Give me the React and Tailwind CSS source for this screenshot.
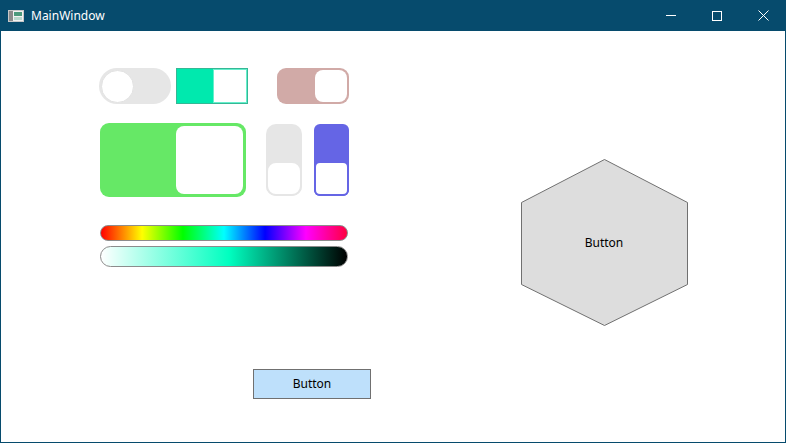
export default function App() {
  const font = { fontFamily: '"Noto Sans", "Open Sans", sans-serif' };
  return (
    <div className="w-[786px] h-[443px] flex flex-col bg-[#064b6d] overflow-hidden" style={font}>
      {/* Title bar */}
      <div className="h-[31px] flex items-center shrink-0 text-white">
        <div className="ml-[8px] w-[16px] h-[16px] flex items-center">
          <svg width="16" height="14" viewBox="0 0 16 14">
            <rect x="0.5" y="1.5" width="15" height="11" fill="#f2f2f2" stroke="#c8c8c8" />
            <rect x="1" y="2" width="4" height="10" fill="#8a8a8a" />
            <rect x="6" y="3" width="8" height="4" fill="#4c9a7c" />
            <rect x="6" y="8" width="8" height="3" fill="#b9d8cc" />
          </svg>
        </div>
        <span className="ml-[7px] text-[12px] leading-none">MainWindow</span>
        <div className="ml-auto flex h-full">
          <div className="w-[46px] h-full flex items-center justify-center">
            <div className="w-[10px] h-px bg-white" />
          </div>
          <div className="w-[46px] h-full flex items-center justify-center">
            <div className="w-[10px] h-[10px] border border-white" />
          </div>
          <div className="w-[46px] h-full flex items-center justify-center">
            <svg width="11" height="11" viewBox="0 0 11 11">
              <path d="M0.5 0.5 L10.5 10.5 M10.5 0.5 L0.5 10.5" stroke="white" strokeWidth="1" />
            </svg>
          </div>
        </div>
      </div>
      {/* Client */}
      <div className="flex-1 mx-px mb-px bg-white flex flex-col">
        <div className="flex pt-[37px]">
          {/* Left column */}
          <div className="ml-[98px] w-[250px] flex flex-col">
            <div className="flex items-start h-[36px]">
              <div className="w-[72px] h-[36px] rounded-full bg-[#e6e6e6] flex items-center px-[2px]">
                <div className="w-[33px] h-[33px] rounded-full bg-white border border-[#e2e2e2]" />
              </div>
              <div className="ml-[5px] w-[72px] h-[36px] bg-[#00e9ae] border border-[#35b895] flex justify-end">
                <div className="w-[34px] h-full bg-white border border-[#66efcc]" />
              </div>
              <div className="ml-[29px] w-[72px] h-[36px] rounded-[9px] bg-[#d1aaa7] flex items-center justify-end pr-[2px]">
                <div className="w-[32px] h-[32px] rounded-[8px] bg-white" />
              </div>
            </div>
            <div className="flex items-start mt-[19px]">
              <div className="ml-px w-[148px] h-[74px] rounded-[9px] bg-[#66e866] flex items-center justify-end pr-[3px]">
                <div className="w-[67px] h-[68px] rounded-[8px] bg-white" />
              </div>
              <div className="ml-[20px] mt-px w-[36px] h-[72px] rounded-[10px] bg-[#e6e6e6] flex flex-col justify-end">
                <div className="w-full h-[35px] rounded-[10px] bg-white border-2 border-[#e6e6e6]" />
              </div>
              <div className="ml-[12px] mt-px w-[36px] h-[72px] rounded-[6px] bg-[#6565e5] flex flex-col justify-end">
                <div className="w-full h-[35px] rounded-[6px] bg-white border-2 border-[#6565e5]" />
              </div>
            </div>
            <div
              className="mt-[28px] ml-px w-[248px] h-[16px] rounded-full border border-[#8c8c8c]"
              style={{ background: 'linear-gradient(to right, #ff0000 0%, #ffff00 16.7%, #00ff00 33.3%, #00ffff 50%, #0000ff 66.7%, #ff00ff 83.3%, #ff0040 100%)' }}
            />
            <div
              className="mt-[5px] ml-px w-[248px] h-[21px] rounded-full border border-[#8c8c8c]"
              style={{ background: 'linear-gradient(to right, #ffffff 0%, #00ffc0 52%, #000000 100%)' }}
            />
          </div>
          {/* Hexagon button */}
          <div className="ml-[172px] mt-[91px] w-[168px] h-[168px] relative flex items-center justify-center">
            <svg width="168" height="168" viewBox="0 0 168 168" className="absolute inset-0">
              <polygon points="83.5,0.5 166.5,43.5 166.5,125.5 83.5,166.5 0.5,125.5 0.5,43.5" fill="#dddddd" stroke="#707070" strokeWidth="1" />
            </svg>
            <span className="relative text-[12px] text-black -ml-[2px]">Button</span>
          </div>
        </div>
        <div className="ml-[252px] mt-[42px] w-[118px] h-[30px] bg-[#bee0fb] border border-[#707070] flex items-center justify-center text-[12px] text-black">
          Button
        </div>
      </div>
    </div>
  );
}
